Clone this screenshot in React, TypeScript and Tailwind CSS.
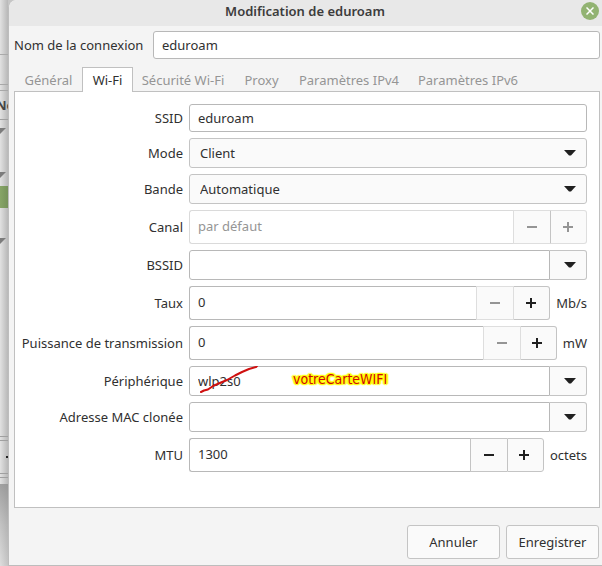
import { useState } from "react";
import type { ReactNode } from "react";

const frame = "border border-[#b8b8b8]";
const stepBase = "flex w-[37px] shrink-0 items-center justify-center bg-[#fafafa]";

function Arrow({ className = "" }: { className?: string }) {
  return (
    <svg className={className} width="12" height="6" viewBox="0 0 12 6" aria-hidden="true">
      <path d="M0 0H12L7 5.6H5Z" fill="#202020" />
    </svg>
  );
}

function Sign({ plus = false }: { plus?: boolean }) {
  return (
    <svg width="10" height="10" viewBox="0 0 10 10" stroke="currentColor" strokeWidth="2" aria-hidden="true">
      <path d={plus ? "M0 5H10M5 0V10" : "M0 5H10"} />
    </svg>
  );
}

function Row({ id, label, children }: { id: string; label: string; children: ReactNode }) {
  return (
    <>
      <label htmlFor={id} className="self-center justify-self-end whitespace-nowrap">
        {label}
      </label>
      <div className="flex min-w-0 items-center gap-1.5">{children}</div>
    </>
  );
}

function Select({ id, value }: { id: string; value: string }) {
  return (
    <div className="relative flex-1">
      <select id={id} className="h-[30px] w-full appearance-none rounded-[3px] border border-[#c4c4c4] bg-[#fafafa] pl-2.5 text-[#303030]">
        <option>{value}</option>
      </select>
      <Arrow className="pointer-events-none absolute top-3 right-[11px]" />
    </div>
  );
}

function Combo({ id, value = "" }: { id: string; value?: string }) {
  return (
    <div className="flex h-[30px] min-w-0 flex-1">
      <input id={id} defaultValue={value} className={`min-w-0 flex-1 rounded-l-[3px] bg-white px-2 ${frame}`} />
      <button type="button" aria-label="Ouvrir la liste" className="flex w-[37px] items-center justify-center rounded-r-[3px] border border-l-0 border-[#c4c4c4] bg-[#fafafa] pl-1">
        <Arrow />
      </button>
    </div>
  );
}

function Spin({ id, value, unit, off = false, atMin = false }: { id: string; value: string; unit?: string; off?: boolean; atMin?: boolean }) {
  const [text, setText] = useState(value);
  const step = (n: number) => setText(String(Math.max(0, Number(text) + n)));
  const minusOff = off || atMin;
  return (
    <>
      <div className="flex h-[34px] min-w-0 flex-1">
        <input
          id={id}
          value={text}
          disabled={off}
          onChange={(e) => setText(e.target.value)}
          className={`min-w-0 flex-1 rounded-l-[3px] border border-r-0 bg-white px-2 pb-0.5 ${off ? "border-[#dadada] text-[#959595]" : "border-[#b8b8b8]"}`}
        />
        <button
          type="button"
          aria-label="Diminuer"
          disabled={minusOff}
          onClick={() => step(-1)}
          className={`${stepBase} border border-r-0 ${minusOff ? "border-[#dedede] text-[#959595]" : "border-[#c4c4c4] text-[#202020]"}`}
        >
          <Sign />
        </button>
        <button
          type="button"
          aria-label="Augmenter"
          disabled={off}
          onClick={() => step(1)}
          className={`${stepBase} rounded-r-[3px] border pr-0.5 ${off ? "border-[#dedede] border-l-[#c4c4c4] text-[#959595]" : atMin ? "border-[#c4c4c4] border-l-[#dedede] text-[#202020]" : "border-[#c4c4c4] text-[#202020]"}`}
        >
          <Sign plus />
        </button>
      </div>
      {unit && <span className="shrink-0">{unit}</span>}
    </>
  );
}

function TreeMark() {
  return (
    <svg width="6" height="6" viewBox="0 0 6 6" className="block" aria-hidden="true">
      <path d="M0 0H6L0 6Z" fill="#7c7c7c" />
    </svg>
  );
}

function BackWindow() {
  return (
    <div className="flex w-2 shrink-0 flex-col overflow-hidden bg-linear-to-r from-[#e2e2e2] to-[#b8b8b8]">
      <div className="h-[55px] shrink-0 border-b border-[#aaaaaa]" />
      <div className="h-[30px] shrink-0 border-b border-[#a8a8a8]" />
      <div className="h-[6px] shrink-0 border-b border-[#a8a8a8]" />
      <div className="flex h-[29px] shrink-0 items-center border-b border-[#a0a0a0]">
        <span className="-ml-1 font-bold text-[#444444]">No</span>
      </div>
      <div className="h-[317px] shrink-0 border-b border-[#a0a0a0] pt-2">
        <TreeMark />
        <div className="h-[38px]" />
        <TreeMark />
        <div className="mt-2 mb-[30px] h-[22px] bg-linear-to-r from-[#87a567] to-[#76925a]" />
        <TreeMark />
      </div>
      <div className="h-[4px] shrink-0 border-b border-[#a0a0a0]" />
      <div className="flex h-[33px] shrink-0 items-center justify-end border-b border-[#a0a0a0]">
        <i className="block size-0.5 bg-[#202020]" />
      </div>
      <div className="h-[4px] shrink-0 border-b border-[#a0a0a0]" />
      <div className="h-[6px] shrink-0" />
      <div className="flex-1 bg-linear-to-b from-[#909090]/80 via-[#b0b0b0]/60 to-[#d8d8d8]/40" />
    </div>
  );
}

const tabs = [
  { name: "Général", width: "w-[67px]" },
  { name: "Wi-Fi", width: "w-[51px]" },
  { name: "Sécurité Wi-Fi", width: "w-[100px]" },
  { name: "Proxy", width: "w-[57px]" },
  { name: "Paramètres IPv4", width: "w-[118px]" },
  { name: "Paramètres IPv6", width: "w-[120px]" },
];

export default function App() {
  return (
    <div className="flex min-h-screen bg-[#c6c6c6] font-['Noto_Sans',sans-serif] text-[13px] leading-5 text-[#303030]">
      <BackWindow />
      <main className="flex min-w-0 flex-1 flex-col rounded-tl-lg border-b border-l border-[#bdbdbd] bg-[#f4f4f4]">
        <header className="flex h-[26px] items-start rounded-tl-lg bg-[#e8e8e8] pr-[3px] pl-5">
          <h1 className="flex-1 pt-px text-center font-semibold text-[#3c3c3c]">Modification de eduroam</h1>
          <button type="button" aria-label="Fermer" className="mt-0.5 flex size-[18px] items-center justify-center rounded-full bg-[#92b372]">
            <svg width="8" height="8" viewBox="0 0 8 8" stroke="white" strokeWidth="1.5" aria-hidden="true">
              <path d="M0.5 0.5L7.5 7.5M7.5 0.5L0.5 7.5" />
            </svg>
          </button>
        </header>

        <div className="mt-[5px] flex items-center gap-3 pr-0.5 pl-[5px]">
          <label htmlFor="nom" className="w-[127px] shrink-0 whitespace-nowrap">
            Nom de la connexion
          </label>
          <input id="nom" defaultValue="eduroam" className={`h-7 min-w-0 flex-1 rounded-[3px] bg-white px-2 ${frame}`} />
        </div>

        <div role="tablist" className="mt-2 flex pl-1.5">
          {tabs.map((t) => (
            <button
              key={t.name}
              type="button"
              role="tab"
              aria-selected={t.name === "Wi-Fi"}
              className={`h-[25px] shrink-0 text-center whitespace-nowrap ${t.width} ${
                t.name === "Wi-Fi" ? "z-10 border border-b-0 border-[#c0c0c0] bg-white" : "text-[#959595]"
              }`}
            >
              {t.name}
            </button>
          ))}
        </div>

        <section className="mr-0.5 ml-[5px] -mt-px grid flex-1 grid-cols-[156px_minmax(0,1fr)] content-start gap-1.5 border border-[#c0c0c0] bg-white p-3">
          <Row id="ssid" label="SSID">
            <input id="ssid" defaultValue="eduroam" className={`h-7 min-w-0 flex-1 rounded-[3px] bg-white px-2 ${frame}`} />
          </Row>
          <Row id="mode" label="Mode">
            <Select id="mode" value="Client" />
          </Row>
          <Row id="bande" label="Bande">
            <Select id="bande" value="Automatique" />
          </Row>
          <Row id="canal" label="Canal">
            <Spin id="canal" value="par défaut" off />
          </Row>
          <Row id="bssid" label="BSSID">
            <Combo id="bssid" />
          </Row>
          <Row id="taux" label="Taux">
            <Spin id="taux" value="0" unit="Mb/s" atMin />
          </Row>
          <Row id="puissance" label="Puissance de transmission">
            <Spin id="puissance" value="0" unit="mW" atMin />
          </Row>
          <Row id="peripherique" label="Périphérique">
            <div className="relative flex min-w-0 flex-1">
              <Combo id="peripherique" value="wlp2s0" />
              <svg className="pointer-events-none absolute top-0 left-2.5" width="60" height="30" viewBox="0 0 60 30" fill="none" aria-hidden="true">
                <path d="M2 26L5 24.5L9 23.5L14 20L22 16.5L28 14L36 9.5L43 6L50 3L57 1L58 0" stroke="#cf1010" strokeWidth="2" strokeLinecap="round" strokeLinejoin="round" />
              </svg>
              <span className="pointer-events-none absolute top-[3px] left-[104px] font-['DejaVu_Sans_Condensed','DejaVu_Sans',sans-serif] text-[14px] text-[#d00808] [text-shadow:0_0_2px_#ff0,0_0_2px_#ff0,1px_1px_1px_#ff0,-1px_-1px_1px_#ff0,1px_-1px_1px_#ff0,-1px_1px_1px_#ff0,2px_0_1px_#ff0,-2px_0_1px_#ff0]">
                votreCarteWIFI
              </span>
            </div>
          </Row>
          <Row id="mac" label="Adresse MAC clonée">
            <Combo id="mac" />
          </Row>
          <Row id="mtu" label="MTU">
            <Spin id="mtu" value="1300" unit="octets" />
          </Row>
        </section>

        <footer className="flex justify-end gap-1.5 pt-[17px] pr-[3px] pb-1.5">
          <button type="button" className="h-[34px] w-[93px] rounded-[3px] border border-[#c4c4c4] bg-[#fafafa]">
            Annuler
          </button>
          <button type="button" className="h-[34px] w-[93px] rounded-[3px] border border-[#c4c4c4] bg-[#fafafa]">
            Enregistrer
          </button>
        </footer>
      </main>
    </div>
  );
}
